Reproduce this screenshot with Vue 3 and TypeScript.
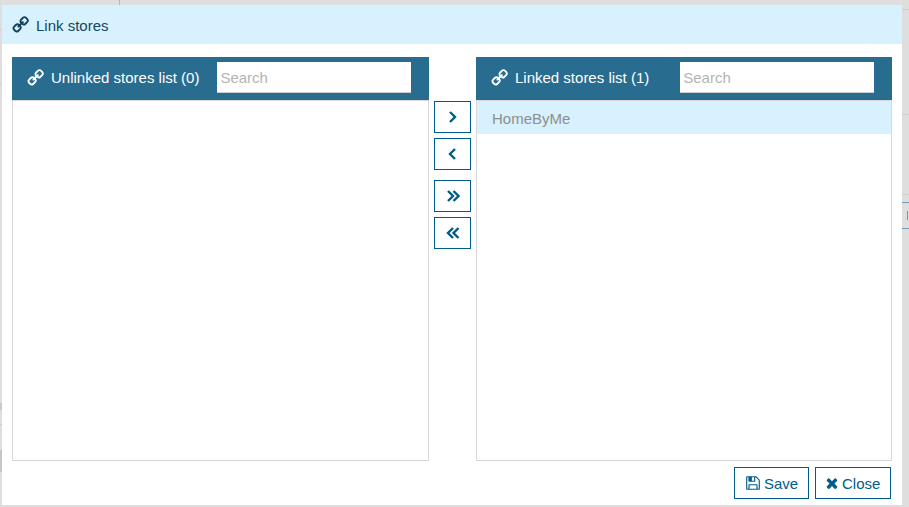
<script setup lang="ts">
const link = 'M1456 1216q0-40-28-68l-208-208q-28-28-68-28-42 0-72 32 3 3 19 18.500t21.500 21.500 15 19 13 25.500 3.500 27.500q0 40-28 68t-68 28q-15 0-27.500-3.500t-25.500-13-19-15-21.500-21.500-18.500-19q-33 31-33 73 0 40 28 68l206 207q27 27 68 27 40 0 68-26l147-146q28-28 28-67zm-703-705q0-40-28-68l-206-207q-28-28-68-28-39 0-68 27l-147 146q-28 28-28 67 0 40 28 68l208 208q27 27 68 27 42 0 72-31-3-3-19-18.500t-21.500-21.500-15-19-13-25.500-3.500-27.500q0-40 28-68t68-28q15 0 27.500 3.500t25.500 13 19 15 21.500 21.500 18.500 19q33-31 33-73zm895 705q0 120-85 203l-147 146q-83 83-203 83-121 0-204-85l-206-207q-83-83-83-203 0-123 88-209l-88-88q-86 88-208 88-120 0-204-84l-208-208q-84-84-84-204t85-203l147-146q83-83 203-83 121 0 204 85l206 207q83 83 83 203 0 123-88 209l88 88q86-88 208-88 120 0 204 84l208 208q84 84 84 204z'
const save = 'M512 1536h768v-384h-768v384zm896 0h128v-896q0-14-10-38.500t-20-34.500l-281-281q-10-10-34-20t-39-10v416q0 40-28 68t-68 28h-576q-40 0-68-28t-28-68v-416h-128v1280h128v-416q0-40 28-68t68-28h832q40 0 68 28t28 68v416zm-384-928v-320q0-13-9.500-22.500t-22.500-9.500h-192q-13 0-22.500 9.500t-9.500 22.500v320q0 13 9.500 22.500t22.500 9.500h192q13 0 22.500-9.500t9.500-22.500zm640 32v928q0 40-28 68t-68 28h-1344q-40 0-68-28t-28-68v-1344q0-40 28-68t68-28h928q40 0 88 20t76 48l280 280q28 28 48 76t20 88z'
const times = 'M1490 1322q0 40-28 68l-136 136q-28 28-68 28t-68-28l-294-294-294 294q-28 28-68 28t-68-28l-136-136q-28-28-28-68t28-68l294-294-294-294q-28-28-28-68t28-68l136-136q28-28 68-28t68 28l294 294 294-294q28-28 68-28t68 28l136 136q28 28 28 68t-28 68l-294 294 294 294q28 28 28 68z'
const moves = [
  { label: 'Add selected', points: ['5 3 10 8 5 13'], cls: 'move' },
  { label: 'Remove selected', points: ['10 3 5 8 10 13'], cls: 'move gap-a' },
  { label: 'Add all', points: ['3 3 8 8 3 13', '8.500 3 13.500 8 8.500 13'], cls: 'move gap-b' },
  { label: 'Remove all', points: ['8 3 3 8 8 13', '13.500 3 8.500 8 13.500 13'], cls: 'move gap-a' },
]
</script>

<template>
  <div class="page">
    <span class="bg bg-v"></span>
    <span class="bg bg-h1"></span>
    <span class="bg bg-h2"></span>
    <span class="bg bg-h3"></span>
    <span class="bg bg-h4"></span>
    <span class="bg bg-h5"></span>
    <span class="bg bg-r1"></span>
    <span class="bg bg-r2"></span>
    <span class="bg bg-r4"></span>
    <span class="bg bg-r3"></span>
    <span class="bg bg-r5"></span>
    <div class="modal">
      <header class="title">
        <svg class="ico link-ico title-ico" viewBox="0 0 1792 1792"><path :d="link" /></svg>
        <span>Link stores</span>
      </header>
      <div class="content">
        <section class="panel left">
          <div class="panel-head">
            <svg class="ico link-ico head-ico" viewBox="0 0 1792 1792"><path :d="link" /></svg>
            <span class="panel-title">Unlinked stores list (0)</span>
            <input class="search search-l" placeholder="Search" />
          </div>
          <div class="list"></div>
        </section>
        <div class="moves">
          <button v-for="m in moves" :key="m.label" :class="m.cls" :aria-label="m.label">
            <svg viewBox="0 0 16 16" class="chev">
              <polyline v-for="p in m.points" :key="p" :points="p" />
            </svg>
          </button>
        </div>
        <section class="panel right">
          <div class="panel-head">
            <svg class="ico link-ico head-ico" viewBox="0 0 1792 1792"><path :d="link" /></svg>
            <span class="panel-title">Linked stores list (1)</span>
            <input class="search search-r" placeholder="Search" />
          </div>
          <div class="list">
            <div class="item">HomeByMe</div>
          </div>
        </section>
      </div>
      <footer class="foot">
        <button class="action save">
          <svg class="ico act-ico" viewBox="0 0 1792 1792"><path :d="save" /></svg>
          Save
        </button>
        <button class="action close">
          <svg class="ico act-ico" viewBox="0 0 1792 1792"><path :d="times" /></svg>
          Close
        </button>
      </footer>
    </div>
  </div>
</template>

<style>
html, body { margin: 0; background: #dedede; }
</style>

<style scoped>
.page {
  position: relative;
  width: 909px;
  height: 507px;
  box-sizing: border-box;
  padding: 5px 7px 2px 2px;
  background: #dedede;
  overflow: hidden;
  font-family: "Liberation Sans", Arial, sans-serif;
}
.bg { position: absolute; background: #cfcfcf; }
.bg-v { left: 119px; top: 0; width: 1px; height: 5px; background: #b5b5b5; }
.bg-h1 { left: 0; top: 29px; width: 2px; height: 1px; }
.bg-h2 { left: 0; top: 84px; width: 2px; height: 1px; }
.bg-h3 { left: 0; top: 424px; width: 2px; height: 1px; }
.bg-h4 { left: 0; top: 403px; width: 2px; height: 7px; background: #c8c8c8; }
.bg-h5 { left: 0; top: 450px; width: 2px; height: 22px; background: #c9c5c1; }
.bg-r1 { left: 902px; top: 9px; width: 7px; height: 1px; }
.bg-r2 { left: 902px; top: 114px; width: 7px; height: 1px; }
.bg-r4 { left: 902px; top: 194px; width: 7px; height: 1px; }
.bg-r3 { left: 902px; top: 202px; width: 7px; height: 1px; background: #6f9db8; box-shadow: 0 26px 0 #6f9db8; }
.bg-r5 { left: 907px; top: 211px; width: 1px; height: 9px; background: #8f8fa0; }
.modal {
  position: relative;
  width: 900px;
  height: 500px;
  background: #fff;
  display: flex;
  flex-direction: column;
}
.title {
  height: 39px;
  flex: none;
  background: #d7f1ff;
  display: flex;
  align-items: center;
  padding-left: 9px;
  gap: 7px;
  color: #164561;
  font-size: 15px;
}
.title span { position: relative; top: 1px; }
.ico { fill: currentColor; display: block; flex: none; }
.link-ico { width: 18px; height: 18px; transform: scaleX(-1); }
.title-ico { color: #15405c; }
.content {
  display: flex;
  padding: 13px 10px 0;
  height: 417px;
  flex: none;
  box-sizing: border-box;
}
.panel { display: flex; flex-direction: column; }
.left { width: 417px; }
.right { width: 416px; }
.panel-head {
  height: 43px;
  flex: none;
  background: #286c90;
  color: #fff;
  display: flex;
  align-items: center;
  padding-left: 14px;
  font-size: 15px;
}
.head-ico { margin-right: 7px; margin-top: -1px; }
.panel-title { white-space: nowrap; margin-top: -2px; }
.search {
  height: 31px;
  box-sizing: border-box;
  border: 0;
  border-bottom: 1px solid #cfcfcf;
  padding: 0 3px;
  margin-bottom: 2px;
  background: #fff;
  font: 15px "Liberation Sans", Arial, sans-serif;
  outline: none;
}
.search::placeholder { color: #b4b4b4; opacity: 1; }
.search-l { width: 194px; margin-left: 18px; }
.search-r { width: 194px; margin-left: 31px; }
.list {
  flex: 1;
  border: 1px solid #d8d8d8;
  background: #fff;
}
.item {
  height: 33px;
  background: #d7f1ff;
  color: #8e8e8e;
  font-size: 15px;
  line-height: 35px;
  padding-left: 15px;
}
.moves {
  width: 47px;
  flex: none;
  padding: 44px 0 0 5px;
  box-sizing: border-box;
  display: flex;
  flex-direction: column;
}
.move {
  width: 37px;
  height: 32px;
  flex: none;
  padding: 0;
  background: #fff;
  border: 1px solid #005c8a;
  display: flex;
  align-items: center;
  justify-content: center;
}
.gap-a { margin-top: 5px; }
.gap-b { margin-top: 10px; }
.chev { width: 16px; height: 16px; fill: none; stroke: #005c8a; stroke-width: 2.400; }
.foot {
  flex: 1;
  display: flex;
  justify-content: flex-end;
  gap: 6px;
  padding: 6px 11px 0 0;
}
.action {
  height: 32px;
  box-sizing: border-box;
  background: #fff;
  border: 1px solid #005c8a;
  color: #005c8a;
  font: 15px "Liberation Sans", Arial, sans-serif;
  display: flex;
  align-items: center;
  justify-content: flex-start;
  gap: 3px;
  padding: 0 0 0 10px;
}
.save { width: 75px; }
.close { width: 76px; gap: 2px; padding-left: 8px; }
.act-ico { width: 16px; height: 16px; }
</style>
